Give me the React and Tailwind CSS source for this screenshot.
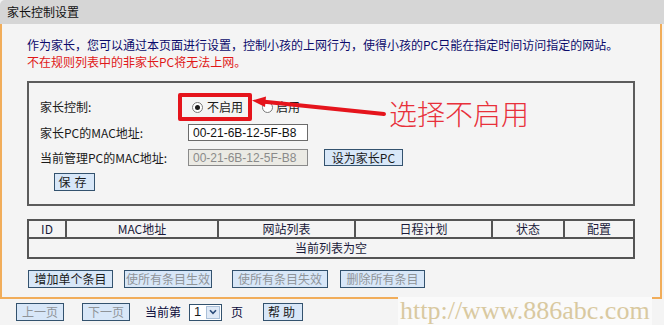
import React from "react";

const FONT = { fontFamily: '"Noto Sans CJK SC", "Liberation Sans", sans-serif' };

function Btn({ children, disabled, className = "" }) {
  return (
    <div
      className={
        "flex items-center justify-center whitespace-nowrap border border-[#33526e] bg-[#d8e7f8] text-[12px] leading-none " +
        (disabled ? "text-[#8f9499] " : "text-[#1a1a1a] ") +
        className
      }
    >
      {children}
    </div>
  );
}

function Radio({ checked }) {
  return (
    <span className="flex h-[11px] w-[11px] items-center justify-center rounded-full border border-[#7a7a7a] bg-white">
      {checked && <span className="h-[5px] w-[5px] rounded-full bg-[#1a1a1a]" />}
    </span>
  );
}

export default function App() {
  return (
    <div
      className="relative h-[325px] w-[664px] overflow-hidden bg-[#f4f4f4] text-[12px] text-[#1a1a1a]"
      style={FONT}
    >
      {/* header */}
      <div className="flex h-[24px] items-center rounded-tl-[5px] bg-[#d6d6d6] pl-[7px] text-[12px] text-[#111]">
        家长控制设置
      </div>

      {/* main section */}
      <div className="w-[662px] border-x-2 border-b-2 border-[#f1ad5a] bg-[#f4f4f4] pb-[9px] pt-[12px]">
        <div className="pl-[25px] leading-[17px]">
          <div className="text-[#0b0b6b]">
            作为家长，您可以通过本页面进行设置，控制小孩的上网行为，使得小孩的PC只能在指定时间访问指定的网站。
          </div>
          <div className="text-[#e01818]">不在规则列表中的非家长PC将无法上网。</div>
        </div>

        {/* settings box */}
        <div className="ml-[25px] mt-[11px] w-[608px] border-2 border-[#5c5c5c] pb-[13px] pl-[11px] pt-[12px]">
          <div className="flex h-[24px] items-center">
            <div className="w-[148px]">家长控制:</div>
            <div className="ml-[4px] flex items-center">
              <Radio checked />
              <span className="ml-[4px]">不启用</span>
              <span className="ml-[19px]">
                <Radio />
              </span>
              <span className="ml-[3px]">启用</span>
            </div>
          </div>
          <div className="mt-[5px] flex h-[17px] items-center">
            <div className="w-[148px]">家长PC的MAC地址:</div>
            <div
              className="flex h-[17px] w-[120px] items-center border border-[#6b6b6b] bg-white pl-[4px] text-[12px] text-[#111]"
              style={{ fontFamily: '"Liberation Sans", sans-serif' }}
            >
              00-21-6B-12-5F-B8
            </div>
          </div>
          <div className="mt-[8px] flex h-[17px] items-center">
            <div className="w-[148px]">当前管理PC的MAC地址:</div>
            <div
              className="flex h-[17px] w-[120px] items-center border border-[#8a8a8a] bg-[#ebeae4] pl-[4px] text-[12px] text-[#8a8a8a]"
              style={{ fontFamily: '"Liberation Sans", sans-serif' }}
            >
              00-21-6B-12-5F-B8
            </div>
            <Btn className="ml-[16px] h-[17px] w-[79px]">设为家长PC</Btn>
          </div>
          <div className="mt-[7px] flex h-[18px] items-center">
            <Btn className="ml-[14px] h-[18px] w-[41px] tracking-[4px]">保存</Btn>
          </div>
        </div>

        {/* table */}
        <div className="ml-[25px] mt-[13px] w-[608px] border-2 border-[#545454] text-[#1a1a3a]">
          <div className="flex h-[18px] items-center border-b-2 border-[#545454] text-center">
            <div className="w-[36px]">ID</div>
            <div className="flex h-full w-[152px] items-center justify-center border-l-2 border-[#545454]">MAC地址</div>
            <div className="flex h-full w-[137px] items-center justify-center border-l-2 border-[#545454]">网站列表</div>
            <div className="flex h-full w-[137px] items-center justify-center border-l-2 border-[#545454]">日程计划</div>
            <div className="flex h-full w-[72px] items-center justify-center border-l-2 border-[#545454]">状态</div>
            <div className="flex h-full flex-1 items-center justify-center border-l-2 border-[#545454]">配置</div>
          </div>
          <div className="flex h-[18px] items-center justify-center">当前列表为空</div>
        </div>

        {/* action buttons */}
        <div className="ml-[26px] mt-[11px] flex h-[18px] items-center">
          <Btn className="h-[18px] w-[85px]">增加单个条目</Btn>
          <Btn disabled className="ml-[11px] h-[18px] w-[88px]">使所有条目生效</Btn>
          <Btn disabled className="ml-[20px] h-[18px] w-[96px]">使所有条目失效</Btn>
          <Btn disabled className="ml-[12px] h-[18px] w-[85px]">删除所有条目</Btn>
        </div>
      </div>

      {/* footer */}
      <div className="flex h-[26px] items-center pl-[16px]">
        <Btn disabled className="h-[18px] w-[48px]">上一页</Btn>
        <Btn disabled className="ml-[18px] h-[18px] w-[48px]">下一页</Btn>
        <span className="ml-[15px] text-[12px] text-[#0b0b3b]">当前第</span>
        <div className="ml-[8px] flex h-[17px] w-[33px] items-center border border-[#33526e] bg-white">
          <span className="pl-[4px] text-[13px]" style={{ fontFamily: '"Liberation Sans", sans-serif' }}>1</span>
          <span className="ml-auto mr-[1px] flex h-[13px] w-[14px] items-center justify-center border border-[#a9bfd8] bg-[#dfe9f6]">
            <svg width="8" height="6" viewBox="0 0 8 6">
              <path d="M1 1.2 L4 4.4 L7 1.2" fill="none" stroke="#2d4d7a" strokeWidth="1.6" />
            </svg>
          </span>
        </div>
        <span className="ml-[9px] text-[12px] text-[#0b0b3b]">页</span>
        <Btn className="ml-[20px] h-[18px] w-[40px] tracking-[3px]">帮助</Btn>
      </div>

      {/* annotation overlay */}
      <div className="absolute left-[178px] top-[93px] h-[28px] w-[74px] rounded-[2px] border-[4px] border-[#e5141c]" />
      <svg className="absolute left-0 top-0" width="664" height="325" viewBox="0 0 664 325">
        <line x1="262" y1="101.5" x2="384" y2="114" stroke="#e5141c" strokeWidth="4" strokeLinecap="round" />
        <polygon points="252,100.5 266,96.5 265,107" fill="#e5141c" />
      </svg>
      <div className="absolute left-[389px] top-[97px] text-[28px] font-light leading-[32px] text-[#e8303a]">
        选择不启用
      </div>
      <div
        className="absolute left-[398px] top-[297px] bg-[#fafafa] px-[2px] text-[26px] leading-[28px] text-[#d9c9a0]"
        style={{ fontFamily: '"Liberation Serif", serif' }}
      >
        http://www.886abc.com
      </div>
    </div>
  );
}
